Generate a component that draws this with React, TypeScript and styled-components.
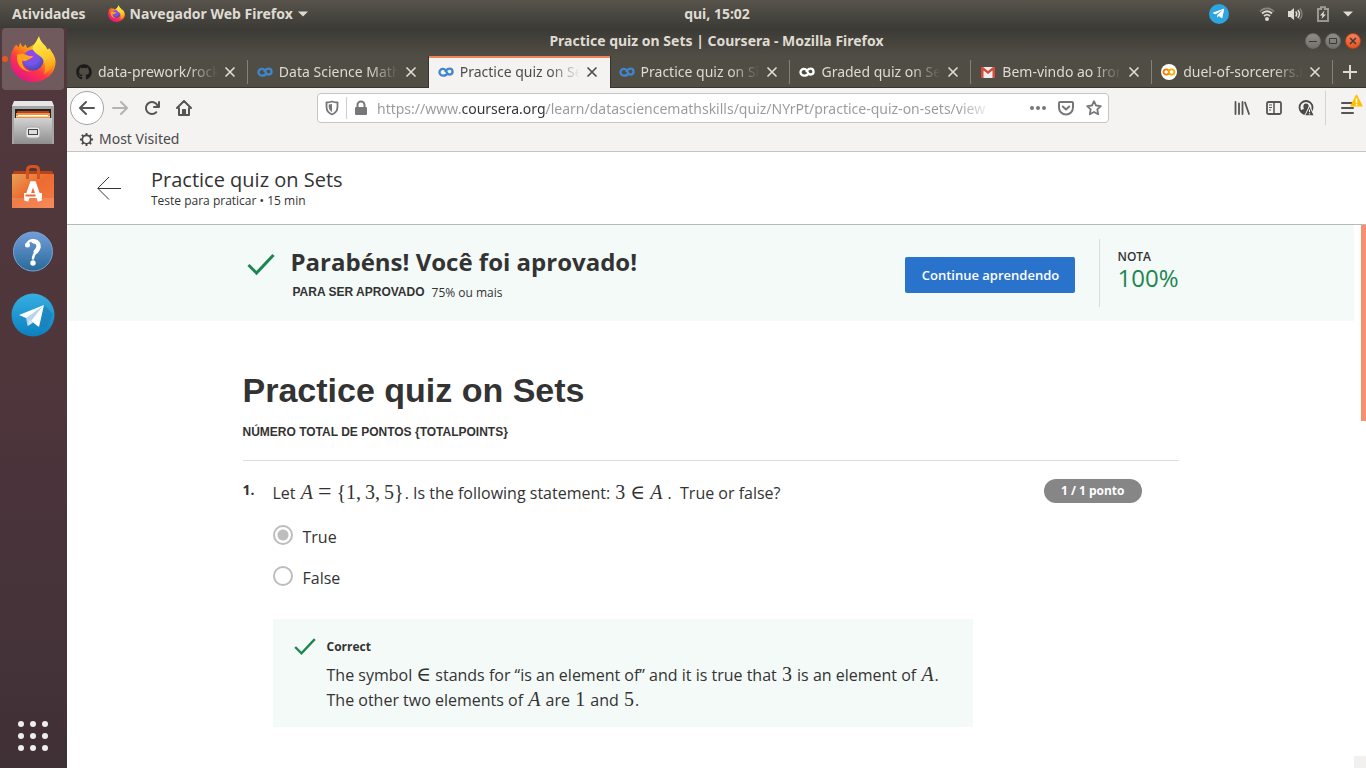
import React from "react";
import styled, { createGlobalStyle, css } from "styled-components";
import { FaGithub, FaTelegramPlane } from "react-icons/fa";

const ui = '"Noto Sans", "Open Sans", sans-serif';
const body = '"Open Sans", "Noto Sans", sans-serif';
const arial = '"Liberation Sans", Arial, sans-serif';
const serif = '"Liberation Serif", "Times New Roman", serif';

const Global = createGlobalStyle`
  * { box-sizing: border-box; }
  body { margin: 0; font-family: ${body}; color: #333; background: #fff; overflow: hidden; }
  button { font: inherit; color: inherit; border: 0; padding: 0; margin: 0; background: none; cursor: pointer; }
  h1, h2, h3, p, fieldset { margin: 0; padding: 0; border: 0; font-weight: inherit; min-width: 0; }
  svg { display: block; flex: none; }
`;

/* ---------- desktop shell ---------- */

const Desktop = styled.div`
  display: flex;
  flex-direction: column;
  height: 100vh;
`;

const TopBar = styled.header`
  flex: none;
  display: grid;
  grid-template-columns: 69px 1fr auto 1fr;
  align-items: center;
  height: 28px;
  padding: 0 13px 1px 12px;
  background: linear-gradient(#58544c, #3c3b36);
  color: #dfdbd2;
  font: bold 14px/20px ${ui};
`;

const TopBarGroup = styled.div<{ $end?: boolean }>`
  grid-column: ${(p) => (p.$end ? "4" : "1 / 3")};
  display: flex;
  align-items: center;
  gap: ${(p) => (p.$end ? "12px" : "22px")};
  justify-content: ${(p) => (p.$end ? "flex-end" : "flex-start")};
`;

const TopBarButton = styled.button`
  display: flex;
  align-items: center;
  gap: 5px;
`;

const TrayButton = styled(TopBarButton)`
  margin-right: 18px;
`;

const Workspace = styled.div`
  flex: 1;
  display: flex;
  min-height: 0;
`;

const Dock = styled.nav`
  flex: none;
  display: flex;
  flex-direction: column;
  gap: 2px;
  width: 67px;
  padding: 0 3px 1px 2px;
  background: linear-gradient(#50383c, #4f363b 48%, #4b333b 60%, #443339 85%, #3f3036);
`;

const DockButton = styled.button<{ $active?: boolean; $last?: boolean }>`
  position: relative;
  display: flex;
  align-items: center;
  justify-content: center;
  height: 62px;
  border-radius: 4px;
  ${(p) => p.$active && css`background: #705a5d;`}
  ${(p) => p.$last && css`margin-top: auto;`}
`;

const RunningDot = styled.span`
  position: absolute;
  left: 0;
  top: 28px;
  width: 6px;
  height: 6px;
  border-radius: 50%;
  background: #ee5420;
`;

/* ---------- browser chrome ---------- */

const Browser = styled.div`
  flex: 1;
  display: flex;
  flex-direction: column;
  min-width: 0;
`;

const TitleBar = styled.div`
  flex: none;
  display: grid;
  grid-template-columns: 1fr auto 1fr;
  align-items: center;
  height: 28px;
  padding: 0 5px 2px;
  background: linear-gradient(#3a3934, #504d45);
  color: #dfdbd2;
`;

const WindowControls = styled.div`
  grid-column: 3;
  display: flex;
  justify-content: flex-end;
  gap: 4px;
`;

const WindowTitle = styled.h1`
  grid-column: 2;
  font: bold 14px/20px ${ui};
`;

const WindowButton = styled.button<{ $close?: boolean }>`
  display: flex;
  align-items: center;
  justify-content: center;
  width: 16px;
  height: 16px;
  border-radius: 50%;
  border: 1px solid ${(p) => (p.$close ? "#b8441c" : "#6c6a64")};
  background: ${(p) => (p.$close ? "linear-gradient(#f5815c, #e9531f)" : "linear-gradient(#8f8d88, #73716c)")};
  color: #3c3b37;
`;

const TabStrip = styled.div`
  flex: none;
  display: flex;
  height: 32px;
  background: #504d45;
  border-bottom: 1px solid #35342f;
`;

const TabBox = styled.div<{ $active?: boolean; $sep?: boolean }>`
  position: relative;
  flex: 1;
  display: flex;
  align-items: center;
  gap: 6px;
  min-width: 0;
  padding: 0 12px 0 9px;
  color: #dfdbd2;
  ${(p) =>
    p.$sep &&
    css`
      &::after {
        content: "";
        position: absolute;
        right: 0;
        top: 4px;
        bottom: 3px;
        width: 1px;
        background: #84817a;
      }
    `}
  ${(p) =>
    p.$active &&
    css`
      margin-bottom: -1px;
      padding-bottom: 1px;
      background: #f4f3f2;
      color: #4c4c4c;
      box-shadow: inset 0 2px #f08458, -1px 0 #35342f, 1px 0 #35342f;
    `}
`;

const TabTitle = styled.button`
  flex: 1;
  min-width: 0;
  overflow: hidden;
  white-space: nowrap;
  text-align: left;
  font: 14px/22px ${ui};
  mask-image: linear-gradient(90deg, #000 calc(100% - 30px), transparent);
`;

const NewTab = styled.button`
  flex: none;
  display: flex;
  align-items: center;
  justify-content: center;
  width: 33px;
  color: #dfdbd2;
`;

const NavBar = styled.div`
  flex: none;
  display: flex;
  align-items: center;
  height: 40px;
  padding: 0 5px 0 3px;
  background: #f4f3f2;
  color: #555;
`;

const NavButtons = styled.div`
  flex: none;
  display: flex;
  align-items: center;
  gap: 16px;
`;

const NavButton = styled.button<{ $dim?: boolean }>`
  display: flex;
  align-items: center;
  justify-content: center;
  width: 16px;
  height: 32px;
  opacity: ${(p) => (p.$dim ? 0.4 : 1)};
`;

const BackButton = styled(NavButton)`
  width: 34px;
  height: 34px;
  margin-right: -8px;
  border: 1px solid #a5a5a5;
  border-radius: 50%;
  background: #fff;
`;

const UrlBox = styled.div`
  flex: 0 1 792px;
  display: flex;
  align-items: center;
  min-width: 0;
  height: 30px;
  margin: 0 auto;
  padding: 0 6px;
  border: 1px solid #c6c5c4;
  border-radius: 4px;
  background: #fff;
  color: #777;
`;

const UrlIcons = styled.div`
  display: flex;
  align-items: center;
  gap: 12px;
`;

const UrlDivider = styled.span`
  width: 1px;
  height: 22px;
  margin: 0 6px 0 6px;
  background: #cfcfcf;
`;

const UrlInput = styled.input`
  flex: 1;
  min-width: 0;
  height: 28px;
  margin: 0 36px 0 8px;
  padding: 0;
  border: 0;
  outline: 0;
  font: 14px/22px ${ui};
  color: transparent;
  background: linear-gradient(
    90deg, #999 85px, #333 85px 169px, #999 169px calc(100% - 36px), transparent
  );
  background-clip: text;
  -webkit-background-clip: text;
`;

const MenuWrap = styled.div`
  display: flex;
  align-items: center;
  height: 34px;
  margin-left: 11px;
  padding-left: 14px;
  border-left: 1px solid #d4d3d2;
`;

const MenuButton = styled.button`
  position: relative;
  display: flex;
  align-items: center;
  width: 21px;
  height: 32px;
`;

const WarningBadge = styled.span`
  position: absolute;
  right: -2px;
  top: 2px;
`;

const Bookmarks = styled.div`
  flex: none;
  height: 24px;
  padding: 0 12px;
  background: #f4f3f2;
  border-bottom: 1px solid #c5c4c2;
`;

const Bookmark = styled.button`
  display: flex;
  align-items: center;
  gap: 5px;
  font: 14px/22px ${ui};
  color: #4a4a4a;
`;

/* ---------- page ---------- */

const PageHeader = styled.header`
  flex: none;
  display: flex;
  align-items: center;
  gap: 30px;
  height: 73px;
  padding: 0 30px;
  border-bottom: 1px solid #b8b8b8;
  background: #fff;
`;

const PageHeading = styled.div`
  padding-top: 2px;
`;

const PageTitle = styled.h2`
  font-size: 20px;
  line-height: 24px;
`;

const Small = styled.p`
  font-size: 12px;
  line-height: 18px;
`;

const Scroller = styled.div`
  position: relative;
  flex: 1;
  min-height: 0;
  padding-right: 12px;
  background: #fff;
`;

const ScrollThumb = styled.span`
  position: absolute;
  top: 0;
  right: 0;
  width: 5px;
  height: 196px;
  background: #f4926e;
`;

const ScrollCorner = styled.span`
  position: absolute;
  right: 0;
  bottom: 0;
  width: 12px;
  height: 12px;
  background: #f2f1f0;
`;

const Column = styled.div`
  max-width: 936px;
  margin: 0 auto;
`;

const Banner = styled.section`
  background: #f3faf8;
`;

const BannerRow = styled(Column)`
  display: flex;
  align-items: center;
  height: 96px;
`;

const BannerText = styled.div`
  flex: 1;
  margin-left: 16px;
  padding-top: 2px;
`;

const BannerTitle = styled.h2`
  font-size: 24px;
  line-height: 36px;
  font-weight: bold;
`;

const BannerNote = styled.p`
  display: flex;
  gap: 7px;
  padding-left: 2px;
  font-size: 12px;
  line-height: 25px;
`;

const Caps = styled.strong`
  font-family: ${arial};
`;

const PrimaryButton = styled.button`
  width: 170px;
  height: 36px;
  margin: 4px 24px 0 0;
  border-radius: 2px;
  background: #2a73cc;
  color: #fff;
  font-size: 13px;
  font-weight: 600;
`;

const Grade = styled.div`
  height: 68px;
  padding: 10px 0 0 17px;
  border-left: 1px solid #d9dddb;
  font-size: 24px;
  line-height: 26px;
  color: #1d8650;
`;

const GradeLabel = styled.div`
  font-size: 12px;
  line-height: 16px;
  font-weight: 600;
  color: #333;
`;

const QuizTitle = styled.h2`
  padding: 47px 0 8px;
  font: bold 34px/44px ${arial};
`;

const QuizMeta = styled.p`
  padding-bottom: 16px;
  border-bottom: 1px solid #ddd;
  font: bold 12px/24px ${arial};
`;

const Question = styled.div`
  display: grid;
  grid-template-columns: 30px 1fr auto;
  padding: 18px 37px 0 0;
`;

const QuestionNumber = styled.div`
  font-size: 14px;
  line-height: 22px;
  font-weight: bold;
`;

const Prompt = styled.legend`
  padding: 0 0 1px;
  font-size: 16px;
  line-height: 28px;
`;

const Math = styled.span`
  margin: 0 1px;
  font: 20px/16px ${serif};
`;

const Equals = styled.span`
  margin: 0 5px;
  font-size: 24px;
`;

const Comma = styled.span`
  margin-right: 4px;
`;

const In = styled.span<{ $spaced?: boolean }>`
  margin: ${(p) => (p.$spaced ? "0 5px" : "0")};
  font: 20px/16px "DejaVu Serif", "DejaVu Sans", serif;
`;

const Points = styled.div`
  height: 24px;
  padding: 0 17px;
  border-radius: 12px;
  background: #868686;
  color: #fff;
  font-size: 12px;
  line-height: 24px;
  font-weight: bold;
`;

const Option = styled.label`
  display: flex;
  align-items: center;
  gap: 10px;
  height: 24px;
  margin-top: 17px;
  font-size: 16px;
`;

const Radio = styled.input`
  appearance: none;
  width: 20px;
  height: 20px;
  margin: 0 0 4px;
  border: 2px solid #bdbdbd;
  border-radius: 50%;
  background: #fff;
  &:checked {
    background: radial-gradient(circle, #bdbdbd 5px, #fff 6px);
  }
`;

const Feedback = styled.section`
  display: grid;
  grid-template-columns: 22px 1fr;
  column-gap: 11px;
  max-width: 700px;
  margin: 29px 0 0 30px;
  padding: 17px 21px 14px;
  background: #f3faf8;
`;

const FeedbackTitle = styled.h3`
  font-size: 12px;
  line-height: 22px;
  font-weight: bold;
`;

const FeedbackText = styled.p`
  grid-column: 2;
  padding-top: 5px;
  font-size: 16px;
  line-height: 25px;
`;

/* ---------- drawings ---------- */

const FirefoxLogo = ({ size, id }: { size: number; id: string }) => (
  <svg width={size} height={size} viewBox="0 0 46 46" aria-hidden="true">
    <defs>
      <linearGradient id={id + "a"} x1=".85" y1=".1" x2=".25" y2=".95">
        <stop offset="0" stopColor="#fff44f" />
        <stop offset=".35" stopColor="#ff980e" />
        <stop offset=".65" stopColor="#ff3647" />
        <stop offset="1" stopColor="#e31587" />
      </linearGradient>
      <radialGradient id={id + "b"} cx=".4" cy=".3" r=".8">
        <stop offset="0" stopColor="#a33cf0" />
        <stop offset=".5" stopColor="#7059e6" />
        <stop offset="1" stopColor="#4a3ba8" />
      </radialGradient>
      <linearGradient id={id + "c"} x1=".4" y1="0" x2=".6" y2="1">
        <stop offset="0" stopColor="#fff44f" />
        <stop offset=".6" stopColor="#ffc72b" />
        <stop offset="1" stopColor="#ff8a16" />
      </linearGradient>
    </defs>
    <path fill={`url(#${id}a)`} d="M9 11c0-2 .7-3.300 1.500-4.200.5 2 1.300 3.200 2.800 4.200.6-1 1.500-2 2.700-2.500 0 1.500.4 2.700 1.500 3.500 4-1.800 8-4 11.500-8 1.200 3 3.600 4 6.500 6l2 3.500 1.500-.5c3 3.500 6.500 7 6.500 13C45.500 38 35 46 23 46S.5 36.500.5 25C.5 18 3 11.500 6.500 8.500 6.700 9.500 7.500 10.600 9 11z" />
    <circle cx="23" cy="24" r="10.500" fill={`url(#${id}b)`} />
    <path fill={`url(#${id}c)`} d="M29 0c1 5 4 7 6.500 10.500L38 15l1-3c3.500 4 5.500 9 4.500 15-1.200 5-4.500 9-9.500 11 2.500-8 .3-14-3-17-3-2.500-6-3.500-8.500-8C23 9 26.500 6 29 0z" />
    <path fill="#ffa21c" d="M7 19c3.500-2 7-1 10 .2 3 1 4.500.8 6 .8-.5 2.300-4 3-5.500 4-2 1.500-3.500 1-5.500.4 0 6 4 10.500 10 11-9 1-16-6-15-16.400z" />
  </svg>
);

const FilesLogo = () => (
  <svg width="44" height="46" viewBox="0 0 44 46" aria-hidden="true">
    <defs>
      <linearGradient id="cab" x1="0" y1="0" x2="0" y2="1">
        <stop offset="0" stopColor="#d2d2d2" />
        <stop offset="1" stopColor="#8e8e8e" />
      </linearGradient>
    </defs>
    <path fill="#e6e6e6" d="M3 1h38l2 5v38H1V6z" />
    <path fill="#a5a5a5" d="M1 6h42v38H1z" />
    <path fill="#222" d="M4 9h36v11H4z" />
    <path fill="#b9401b" d="M6 11h32v3H6z" />
    <path fill="#f1913f" d="M5 13h34v7H5z" />
    <path fill="#fff" d="M7 15h30v1H7z" />
    <path fill="#fbd9ae" d="M5 16h34v1H5z" />
    <path fill="url(#cab)" d="M3 18h38v26H3z" />
    <rect x="15" y="27" width="14" height="11" rx="3" fill="#e9e9e9" stroke="#aaa" />
    <rect x="17.500" y="29.500" width="9" height="5" fill="#ddd" stroke="#444" />
  </svg>
);

const SoftwareLogo = () => (
  <svg width="42" height="44" viewBox="0 0 42 44" aria-hidden="true">
    <defs>
      <linearGradient id="bag" x1="0" y1="0" x2="1" y2="1">
        <stop offset="0" stopColor="#e9a156" />
        <stop offset=".45" stopColor="#ec6b31" />
        <stop offset="1" stopColor="#f47b43" />
      </linearGradient>
    </defs>
    <path fill="#b8431b" d="M2 6h38l2 4H0z" />
    <path fill="url(#bag)" d="M0 9h42v34H0z" />
    <path fill="#fff" fillOpacity=".12" d="M0 33h42v10H0z" />
    <path fill="none" stroke="#d4541f" strokeWidth="3" d="M15.500 14V5q0-3.500 4-3.500h3q4 0 4 3.500v9" />
    <path fill="none" stroke="#fff" strokeWidth="4.500" d="M14 36l6-17.500h2L28 36" />
    <path fill="#fff" d="M12 28h18v5H12z" />
    <path fill="#ee6b31" d="M13.500 29.500h10v2h-10z" />
  </svg>
);

const HelpLogo = () => (
  <svg width="42" height="42" viewBox="0 0 42 42" aria-hidden="true">
    <defs>
      <linearGradient id="help" x1="0" y1="0" x2="0" y2="1">
        <stop offset="0" stopColor="#739ddb" />
        <stop offset="1" stopColor="#286a99" />
      </linearGradient>
    </defs>
    <circle cx="21" cy="21.500" r="19.500" fill="url(#help)" stroke="#76a5d4" />
    <path fill="none" stroke="#fff" strokeWidth="2.500" strokeLinecap="round" d="M15 15c.5-3.500 3.500-5 6.500-4.800M21 28.500c.3-6 5.500-7 6-11.500" />
    <path fill="none" stroke="#fff" strokeWidth="4.500" strokeLinecap="round" d="M21.500 11.200c4 .3 5.500 3 5 6-.3 2-1.500 3-2.800 4.500" />
    <circle cx="15.500" cy="15" r="2.500" fill="#fff" />
    <circle cx="21" cy="33" r="2.700" fill="#fff" />
  </svg>
);

const TelegramLogo = () => (
  <svg width="44" height="44" viewBox="0 0 44 44" aria-hidden="true">
    <defs>
      <linearGradient id="tele" x1="0" y1="0" x2="0" y2="1">
        <stop offset="0" stopColor="#37aee2" />
        <stop offset="1" stopColor="#0a80bf" />
      </linearGradient>
    </defs>
    <circle cx="22" cy="22" r="21.500" fill="url(#tele)" />
    <path fill="#1a7db5" fillOpacity=".6" d="M33 12l9 9-6 13-8 1z" />
    <path fill="#b9d4ea" d="M15 24l1.500 9 4-5 11-14z" />
    <path fill="#fff" d="M8 22l25-10-5 22-8-6L31 14 15 25z" />
    <path fill="#dce9f5" d="M17 33l1.500-6 3.500 2.500z" />
  </svg>
);

const Infinity = ({ color }: { color: string }) => (
  <svg width="16" height="16" viewBox="0 0 16 16" fill="none" stroke={color} strokeWidth="2.300" aria-hidden="true">
    <path d="M9.700 9.300C8.300 11.500 6.600 11.600 5 11.600a3.400 3.400 0 1 1 2.600-5.500l1.300 2.500A2.900 2.900 0 1 0 11.200 4.700C9.500 4.700 8.300 6 7.200 8" />
  </svg>
);

const Gmail = () => (
  <svg width="16" height="16" viewBox="0 0 16 16" aria-hidden="true">
    <path fill="#eee" d="M1 3h14v11H1z" />
    <path fill="#d54b3d" d="M1 3h2l5 4 5-4h2v11h-2.500V6.500L8 10 3.500 6.500V14H1z" />
  </svg>
);

const Colab = () => (
  <svg width="16" height="16" viewBox="0 0 16 16" fill="none" strokeWidth="1.800" aria-hidden="true">
    <circle cx="8" cy="8" r="8" fill="#fff" />
    <circle cx="5.200" cy="8" r="2.700" stroke="#f57c00" />
    <circle cx="10.700" cy="8" r="2.700" stroke="#f9ab00" />
  </svg>
);

const Cross = () => (
  <svg width="12" height="12" viewBox="0 0 12 12" stroke="currentColor" strokeWidth="1.700" strokeLinecap="round" aria-hidden="true">
    <path d="M2 2l8 8M10 2l-8 8" />
  </svg>
);

const ArrowLeft = () => (
  <svg width="16" height="16" viewBox="0 0 16 16" fill="currentColor" aria-hidden="true">
    <path d="M15 7H3.414l4.293-4.293a1 1 0 0 0-1.414-1.414l-6 6a1 1 0 0 0 0 1.414l6 6a1 1 0 0 0 1.414-1.414L3.414 9H15a1 1 0 0 0 0-2z" />
  </svg>
);

const ArrowRight = () => (
  <svg width="16" height="16" viewBox="0 0 16 16" fill="currentColor" aria-hidden="true">
    <path d="M1 7h11.586L8.293 2.707a1 1 0 0 1 1.414-1.414l6 6a1 1 0 0 1 0 1.414l-6 6a1 1 0 0 1-1.414-1.414L12.586 9H1a1 1 0 0 1 0-2z" />
  </svg>
);

const Reload = () => (
  <svg width="16" height="16" viewBox="0 0 16 16" fill="currentColor" aria-hidden="true">
    <path d="M15 1a1 1 0 0 0-1 1v2.418A6.995 6.995 0 1 0 8 15a6.954 6.954 0 0 0 4.950-2.050 1 1 0 0 0-1.414-1.414A5.019 5.019 0 1 1 12.549 6H10a1 1 0 0 0 0 2h5a1 1 0 0 0 1-1V2a1 1 0 0 0-1-1z" />
  </svg>
);

const Home = () => (
  <svg width="16" height="16" viewBox="0 0 16 16" fill="none" stroke="currentColor" strokeWidth="2" strokeLinecap="round" strokeLinejoin="round" aria-hidden="true">
    <path d="M1 8l7-7 7 7M3 8v7h10V8" />
    <path strokeWidth="1.500" d="M6.700 14.500V9.700h2.600v4.800M8 11v3" />
  </svg>
);

const Shield = () => (
  <svg width="16" height="16" viewBox="0 0 16 16" fill="none" stroke="currentColor" aria-hidden="true">
    <path strokeWidth="1.800" strokeLinejoin="round" d="M8 1.500c2 .7 3.800 1 5.500 1v4.300c0 3.700-2.500 6.500-5.500 7.700-3-1.200-5.500-4-5.500-7.700V2.500c1.700 0 3.500-.3 5.500-1z" />
    <path fill="currentColor" stroke="none" d="M8 4v8c-2-1-3.300-3-3.300-5.500v-2z" />
  </svg>
);

const Lock = () => (
  <svg width="16" height="16" viewBox="0 0 16 16" aria-hidden="true">
    <rect x="2" y="7" width="12" height="8" rx="1" fill="currentColor" />
    <path fill="none" stroke="currentColor" strokeWidth="2" d="M4.500 8V5a3.500 3.500 0 0 1 7 0v3" />
  </svg>
);

const Dots = () => (
  <svg width="16" height="16" viewBox="0 0 16 16" fill="currentColor" aria-hidden="true">
    <circle cx="2" cy="8" r="2" /><circle cx="8" cy="8" r="2" /><circle cx="14" cy="8" r="2" />
  </svg>
);

const Pocket = () => (
  <svg width="16" height="16" viewBox="0 0 16 16" fill="none" stroke="currentColor" strokeWidth="2" strokeLinecap="round" strokeLinejoin="round" aria-hidden="true">
    <path d="M2 2h12a1 1 0 0 1 1 1v4.500a7 7 0 0 1-14 0V3a1 1 0 0 1 1-1z" />
    <path d="M4.800 6.500L8 9.500l3.200-3" />
  </svg>
);

const Star = () => (
  <svg width="16" height="16" viewBox="0 0 16 16" fill="none" stroke="currentColor" strokeWidth="1.800" strokeLinejoin="round" aria-hidden="true">
    <path d="M8 1.200l2 4.300 4.800.6-3.500 3.300.9 4.900L8 12l-4.200 2.300.9-4.900L1.200 6.100 6 5.500z" />
  </svg>
);

const Library = () => (
  <svg width="16" height="16" viewBox="0 0 16 16" fill="none" stroke="currentColor" strokeWidth="1.800" strokeLinecap="round" aria-hidden="true">
    <path d="M1.500 2v12M5 3.500V14M8.500 2v12M11 2.500l4 11.500" />
  </svg>
);

const Sidebar = () => (
  <svg width="16" height="16" viewBox="0 0 16 16" fill="none" stroke="currentColor" strokeWidth="1.800" aria-hidden="true">
    <rect x="1" y="2" width="14" height="12" rx="1.500" />
    <path d="M8 2v12" strokeWidth="1.500" />
    <path d="M3 5h3M3 7.500h3M3 10h2" strokeWidth="1" />
  </svg>
);

const Account = () => (
  <svg width="16" height="16" viewBox="0 0 16 16" aria-hidden="true">
    <circle cx="8" cy="7.500" r="6.500" fill="none" stroke="#4a4a4a" strokeWidth="1.800" />
    <path fill="#4a4a4a" d="M2 10.500c1.500-1 3-1 4-1.500C5 7 5 3.500 8 3.500c2 0 3 1.500 2.800 3.500L8 14c-2.500 0-5-1-6-3.500z" />
    <path fill="#4a4a4a" stroke="#f4f3f2" d="M11.500 6l4.800 9.800H6.700z" />
    <path stroke="#f4f3f2" strokeWidth="1.200" d="M11.500 9.500v2.800M11.500 13.200v1.200" />
  </svg>
);

const Hamburger = () => (
  <svg width="14" height="16" viewBox="0 0 14 16" stroke="currentColor" strokeWidth="2" strokeLinecap="round" aria-hidden="true">
    <path d="M2 3h11M2 8h11M2 13h11" />
  </svg>
);

const Warning = () => (
  <svg width="13" height="13" viewBox="0 0 12 12" aria-hidden="true">
    <path fill="#ffbf00" stroke="#ffbf00" strokeLinejoin="round" d="M6 1l5.200 10H.8z" />
    <path stroke="#fff" strokeWidth="1.500" d="M6 4v4M6 9v1.500" />
  </svg>
);

const Gear = () => (
  <svg width="15" height="15" viewBox="0 0 16 16" fill="none" stroke="currentColor" aria-hidden="true">
    <circle cx="8" cy="8" r="4.500" strokeWidth="1.800" />
    <path strokeWidth="2" d="M8 1v2.500M8 12.500V15M1 8h2.500M12.500 8H15M3 3l1.800 1.800M11.200 11.200L13 13M13 3l-1.800 1.800M4.800 11.200L3 13" />
  </svg>
);

const Caret = () => (
  <svg width="10" height="6" viewBox="0 0 10 6" fill="currentColor" aria-hidden="true">
    <path d="M0 .5h10L5 5.500z" />
  </svg>
);

const TrayTelegram = styled.span`
  display: flex;
  align-items: center;
  justify-content: center;
  width: 20px;
  height: 20px;
  padding-right: 2px;
  border-radius: 50%;
  background: #2ca5e0;
  color: #fff;
`;

const Wifi = () => (
  <svg width="16" height="16" viewBox="0 0 16 16" fill="none" stroke="currentColor" strokeWidth="1.800" aria-hidden="true">
    <path opacity=".4" d="M1 5.500C5 1.300 11 1.300 15 5.500" />
    <path d="M3 7.500c3-3 7-3 10 0M5 10c2-1.800 4-1.800 6 0" />
    <circle cx="8" cy="13" r="2" fill="currentColor" stroke="none" />
  </svg>
);

const Volume = () => (
  <svg width="16" height="16" viewBox="0 0 16 16" fill="none" stroke="currentColor" strokeWidth="1.500" aria-hidden="true">
    <path fill="currentColor" stroke="none" d="M1 5h2.500L7 2v12l-3.500-3H1z" />
    <path d="M8.700 5.500c1.300 1.500 1.300 3.500 0 5M10.800 4c2 2.400 2 5.600 0 8" />
    <path opacity=".4" d="M12.700 2.500c3 3.300 3 7.700 0 11" />
  </svg>
);

const Battery = () => (
  <svg width="16" height="16" viewBox="0 0 16 16" fill="none" stroke="currentColor" aria-hidden="true">
    <path opacity=".55" strokeWidth="2" d="M3 3h3V1.200h4V3h3v12H3z" />
    <path fill="currentColor" stroke="none" d="M9.500 4.500L5 9.500h2.500L6.500 13 11 8.500H8.500z" />
  </svg>
);

const AppGrid = () => (
  <svg width="32" height="32" viewBox="0 0 32 32" fill="#eeeeec" aria-hidden="true">
    {[4, 16, 28].map((y) => [4, 16, 28].map((x) => <circle key={`${x}-${y}`} cx={x} cy={y} r="3" />))}
  </svg>
);

const Check = ({ size }: { size: number }) => (
  <svg width={size} height={size} viewBox="0 0 28 28" fill="none" stroke="#1d8650" strokeWidth="3" aria-hidden="true">
    <path d="M1.500 14l8 8L26.500 4" />
  </svg>
);

const CheckSlot = styled.span`
  padding: 0 0 16px 4px;
`;

const tabs = [
  { title: "data-prework/rock", icon: <FaGithub size={16} color="#1b1b1b" />, sep: true },
  { title: "Data Science Math", icon: <Infinity color="#3f86cc" /> },
  { title: "Practice quiz on Se", icon: <Infinity color="#3f86cc" />, active: true },
  { title: "Practice quiz on Si", icon: <Infinity color="#3f86cc" />, sep: true },
  { title: "Graded quiz on Se", icon: <Infinity color="#fff" />, sep: true },
  { title: "Bem-vindo ao Iron", icon: <Gmail />, sep: true },
  { title: "duel-of-sorcerers.i", icon: <Colab />, sep: true },
];

export default function App() {
  return (
    <Desktop>
      <Global />
      <TopBar>
        <TopBarGroup>
          <TopBarButton>Atividades</TopBarButton>
          <TopBarButton>
            <FirefoxLogo size={17} id="s" />
            Navegador Web Firefox
            <Caret />
          </TopBarButton>
        </TopBarGroup>
        <TopBarButton>qui, 15:02</TopBarButton>
        <TopBarGroup $end>
          <TrayButton aria-label="Telegram">
            <TrayTelegram><FaTelegramPlane size={13} /></TrayTelegram>
          </TrayButton>
          <Wifi />
          <Volume />
          <Battery />
          <Caret />
        </TopBarGroup>
      </TopBar>
      <Workspace>
        <Dock>
          <DockButton $active aria-label="Firefox"><RunningDot /><FirefoxLogo size={46} id="l" /></DockButton>
          <DockButton aria-label="Files"><FilesLogo /></DockButton>
          <DockButton aria-label="Software"><SoftwareLogo /></DockButton>
          <DockButton aria-label="Help"><HelpLogo /></DockButton>
          <DockButton aria-label="Telegram"><TelegramLogo /></DockButton>
          <DockButton $last aria-label="Applications"><AppGrid /></DockButton>
        </Dock>
        <Browser>
          <TitleBar>
            <WindowTitle>Practice quiz on Sets | Coursera - Mozilla Firefox</WindowTitle>
            <WindowControls>
              <WindowButton aria-label="Minimize">
                <svg width="8" height="8" stroke="currentColor"><path d="M0 4.500h8" /></svg>
              </WindowButton>
              <WindowButton aria-label="Maximize">
                <svg width="8" height="8" fill="none" stroke="currentColor"><path d="M.5 1.500h7v5h-7z" /></svg>
              </WindowButton>
              <WindowButton $close aria-label="Close">
                <svg width="8" height="8" stroke="currentColor" strokeWidth="1.500"><path d="M1 1l6 6M7 1L1 7" /></svg>
              </WindowButton>
            </WindowControls>
          </TitleBar>
          <TabStrip>
            {tabs.map((t) => (
              <TabBox key={t.title} $active={t.active} $sep={t.sep}>
                {t.icon}
                <TabTitle>{t.title}</TabTitle>
                <button aria-label="Close tab"><Cross /></button>
              </TabBox>
            ))}
            <NewTab aria-label="New tab">
              <svg width="14" height="14" stroke="currentColor" strokeWidth="2"><path d="M7 0v14M0 7h14" /></svg>
            </NewTab>
          </TabStrip>
          <NavBar>
            <NavButtons>
              <BackButton aria-label="Back"><ArrowLeft /></BackButton>
              <NavButton $dim aria-label="Forward"><ArrowRight /></NavButton>
              <NavButton aria-label="Reload"><Reload /></NavButton>
              <NavButton aria-label="Home"><Home /></NavButton>
            </NavButtons>
            <UrlBox>
              <Shield />
              <UrlDivider />
              <Lock />
              <UrlInput
                aria-label="Address"
                defaultValue="https://www.coursera.org/learn/datasciencemathskills/quiz/NYrPt/practice-quiz-on-sets/view"
              />
              <UrlIcons><Dots /><Pocket /><Star /></UrlIcons>
            </UrlBox>
            <NavButtons>
              <NavButton aria-label="Library"><Library /></NavButton>
              <NavButton aria-label="Sidebars"><Sidebar /></NavButton>
              <NavButton aria-label="Account"><Account /></NavButton>
            </NavButtons>
            <MenuWrap>
              <MenuButton aria-label="Menu">
                <Hamburger />
                <WarningBadge><Warning /></WarningBadge>
              </MenuButton>
            </MenuWrap>
          </NavBar>
          <Bookmarks>
            <Bookmark><Gear />Most Visited</Bookmark>
          </Bookmarks>
          <PageHeader>
            <button aria-label="Voltar">
              <svg width="24" height="24" viewBox="0 0 24 24" fill="none" stroke="#333" aria-hidden="true">
                <path d="M24 12.500H1M12 1L.8 12.300 12 23.500" />
              </svg>
            </button>
            <PageHeading>
              <PageTitle>Practice quiz on Sets</PageTitle>
              <Small>Teste para praticar • 15 min</Small>
            </PageHeading>
          </PageHeader>
          <Scroller>
            <Banner>
              <BannerRow>
                <CheckSlot><Check size={28} /></CheckSlot>
                <BannerText>
                  <BannerTitle>Parabéns! Você foi aprovado!</BannerTitle>
                  <BannerNote><Caps>PARA SER APROVADO</Caps> <span>75% ou mais</span></BannerNote>
                </BannerText>
                <PrimaryButton>Continue aprendendo</PrimaryButton>
                <Grade><GradeLabel>NOTA</GradeLabel>100%</Grade>
              </BannerRow>
            </Banner>
            <Column>
              <QuizTitle>Practice quiz on Sets</QuizTitle>
              <QuizMeta>NÚMERO TOTAL DE PONTOS {"{TOTALPOINTS}"}</QuizMeta>
              <Question>
                <QuestionNumber>1.</QuestionNumber>
                <fieldset>
                  <Prompt>
                    Let{" "}
                    <Math>
                      <i>A</i><Equals>=</Equals>{"{"}1<Comma>,</Comma>3<Comma>,</Comma>5{"}"}
                    </Math>
                    . Is the following statement: <Math>3<In $spaced>∈</In><i>A</i></Math> .&nbsp; True or false?
                  </Prompt>
                  <Option><Radio type="radio" name="q1" defaultChecked />True</Option>
                  <Option><Radio type="radio" name="q1" />False</Option>
                </fieldset>
                <Points>1 / 1 ponto</Points>
              </Question>
              <Feedback>
                <Check size={22} />
                <FeedbackTitle>Correct</FeedbackTitle>
                <FeedbackText>
                  The symbol <In>∈</In> stands for “is an element of” and it is true that <Math>3</Math> is an element of{" "}
                  <Math><i>A</i></Math>. The other two elements of <Math><i>A</i></Math> are <Math>1</Math> and{" "}
                  <Math>5</Math>.
                </FeedbackText>
              </Feedback>
            </Column>
            <ScrollThumb />
            <ScrollCorner />
          </Scroller>
        </Browser>
      </Workspace>
    </Desktop>
  );
}
